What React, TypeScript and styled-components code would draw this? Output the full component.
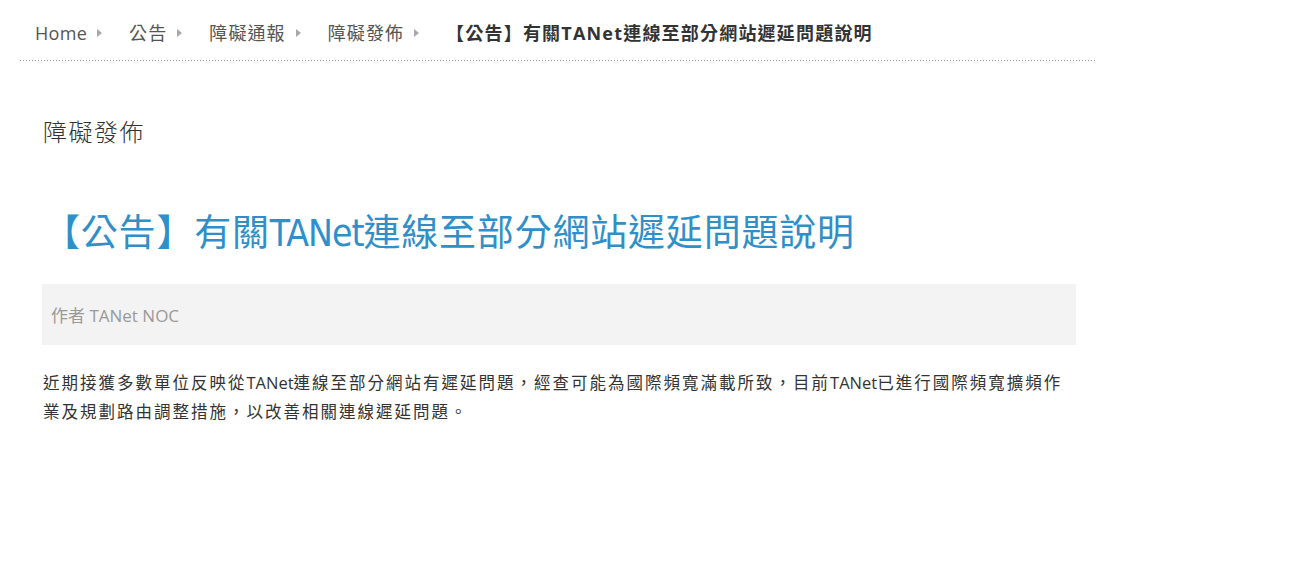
import React from "react";
import styled, { createGlobalStyle } from "styled-components";

const Global = createGlobalStyle`
  html, body { margin: 0; padding: 0; background: #fff; }
  body { font-family: "Open Sans", "Noto Sans CJK TC", sans-serif; color: #333; }
`;

const Page = styled.div`
  width: 1303px;
  min-height: 577px;
  background: #fff;
`;

const Breadcrumb = styled.nav`
  margin-left: 20px;
  width: 1077px;
  padding: 20px 0 15px 15px;
  box-sizing: border-box;
  background-image: linear-gradient(to right, #9a9a9a 1px, transparent 1px);
  background-size: 3px 1px;
  background-repeat: repeat-x;
  background-position: 0 100%;
  display: flex;
  align-items: center;
`;

const Crumb = styled.span<{ $current?: boolean; $latin?: boolean }>`
  font-size: 18px;
  line-height: 26px;
  color: ${(p) => (p.$current ? "#333" : "#555")};
  font-weight: ${(p) => (p.$current ? 700 : 400)};
  font-family: "Open Sans", "Noto Sans CJK TC", sans-serif;
  letter-spacing: ${(p) => (p.$current ? "1.2px" : p.$latin ? "0.3px" : "1.1px")};
`;

const Caret = styled.span`
  display: inline-block;
  width: 0;
  height: 0;
  border-top: 4px solid transparent;
  border-bottom: 4px solid transparent;
  border-left: 5px solid #a8a8a8;
  margin: 0 27px 0 10px;
`;

const Content = styled.main`
  padding: 0 0 0 43px;
  width: 1076px;
  box-sizing: border-box;
`;

const Category = styled.div`
  font-size: 24px;
  line-height: 30px;
  color: #333;
  font-family: "Noto Sans CJK TC", sans-serif;
  font-weight: 300;
  margin-top: 55px;
  letter-spacing: 1.5px;
`;

const Title = styled.h1`
  margin: 60px 0 0 0;
  font-size: 37px;
  line-height: 48px;
  font-weight: 400;
  color: #2f8fc9;
  font-family: "Noto Sans CJK TC", sans-serif;
  letter-spacing: 0.8px;
`;

const Condensed = styled.span`
  font-family: "Liberation Sans Narrow", "DejaVu Sans Condensed", "Roboto", sans-serif;
  font-stretch: condensed;
  letter-spacing: -1px;
  font-weight: 400;
`;

const Meta = styled.div`
  margin: 26px 0 0 -1px;
  height: 61px;
  background: #f3f3f3;
  display: flex;
  align-items: center;
  padding-left: 9px;
  font-size: 17px;
  color: #999;
  font-family: "Open Sans", "Noto Sans CJK TC", sans-serif;
`;

const Body = styled.p`
  margin: 23px 0 0 0;
  font-size: 16.5px;
  line-height: 29px;
  color: #333;
  font-family: "Open Sans", "Noto Sans CJK TC", sans-serif;
  letter-spacing: 2px;
  width: 1030px;
`;

const Latin = styled.span`
  letter-spacing: 0;
`;

export default function App() {
  return (
    <Page>
      <Global />
      <Breadcrumb>
        <Crumb $latin>Home</Crumb>
        <Caret />
        <Crumb>公告</Crumb>
        <Caret />
        <Crumb>障礙通報</Crumb>
        <Caret />
        <Crumb>障礙發佈</Crumb>
        <Caret />
        <Crumb $current>【公告】有關TANet連線至部分網站遲延問題說明</Crumb>
      </Breadcrumb>
      <Content>
        <Category>障礙發佈</Category>
        <Title>
          【公告】有關<Condensed>TANet</Condensed>連線至部分網站遲延問題說明
        </Title>
        <Meta>作者 TANet NOC</Meta>
        <Body>
          近期接獲多數單位反映從<Latin>TANet</Latin>連線至部分網站有遲延問題，經查可能為國際頻寬滿載所致，目前<Latin>TANet</Latin>已進行國際頻寬擴頻作業及規劃路由調整措施，以改善相關連線遲延問題。
        </Body>
      </Content>
    </Page>
  );
}
